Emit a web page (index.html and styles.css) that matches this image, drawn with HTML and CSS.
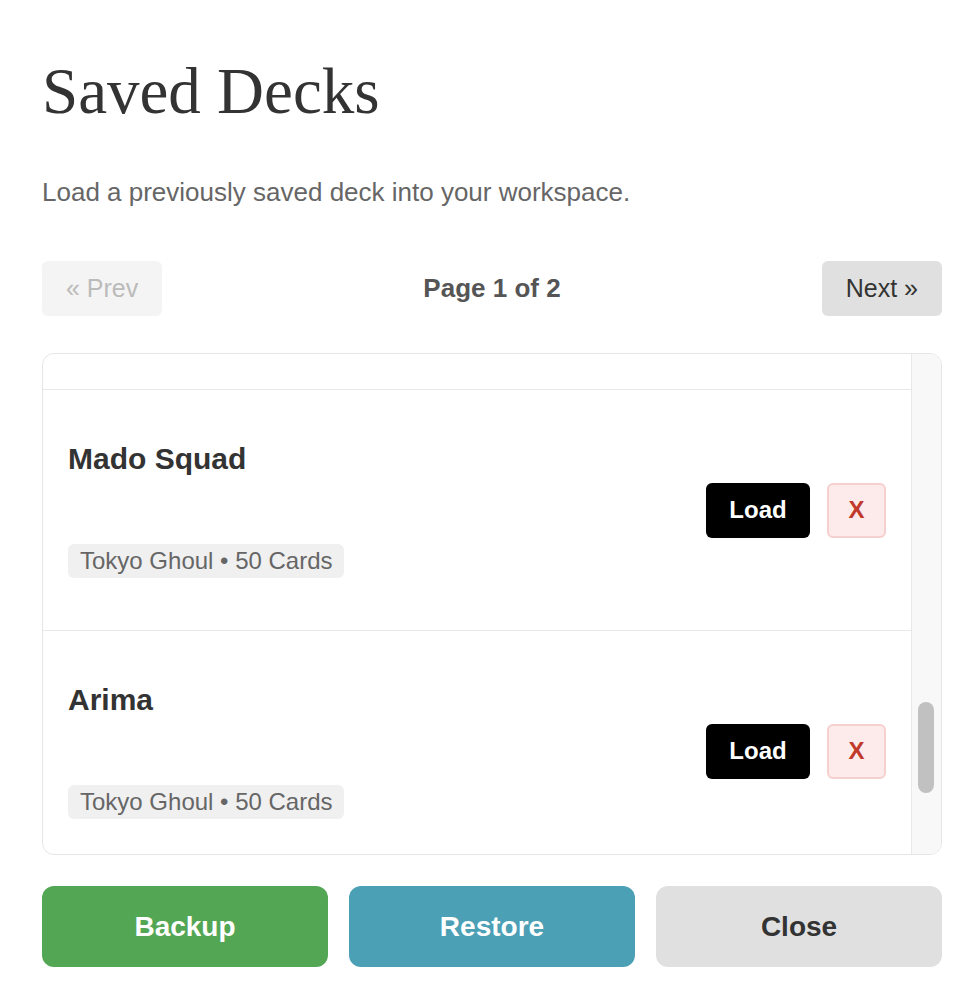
FILE: index.html
```html
<!DOCTYPE html>
<html lang="en">

<head>
    <meta charset="UTF-8">
    <meta name="viewport" content="width=device-width, initial-scale=1.0">
    <title>Saved Decks</title>
    <link rel="stylesheet" href="styles.css">
</head>

<body>
    <div class="modal">
        <h1 class="title">Saved Decks</h1>
        <p class="subtitle">Load a previously saved deck into your workspace.</p>

        <div class="pager">
            <button class="pager-btn" disabled>&laquo; Prev</button>
            <span class="pager-label">Page 1 of 2</span>
            <button class="pager-btn">Next &raquo;</button>
        </div>

        <div class="list-box">
            <div class="deck-list" id="deckList">
                <div class="deck">
                    <div class="deck-info">
                        <div class="deck-name">Kaneki Rush</div>
                        <div><span class="deck-meta">Tokyo Ghoul &bull; 50 Cards</span></div>
                    </div>
                    <div class="deck-actions">
                        <button class="load-btn">Load</button>
                        <button class="delete-btn">X</button>
                    </div>
                </div>
                <div class="deck">
                    <div class="deck-info">
                        <div class="deck-name">Aogiri Tree</div>
                        <div><span class="deck-meta">Tokyo Ghoul &bull; 50 Cards</span></div>
                    </div>
                    <div class="deck-actions">
                        <button class="load-btn">Load</button>
                        <button class="delete-btn">X</button>
                    </div>
                </div>
                <div class="deck">
                    <div class="deck-info">
                        <div class="deck-name">Anteiku</div>
                        <div><span class="deck-meta">Tokyo Ghoul &bull; 50 Cards</span></div>
                    </div>
                    <div class="deck-actions">
                        <button class="load-btn">Load</button>
                        <button class="delete-btn">X</button>
                    </div>
                </div>
                <div class="deck">
                    <div class="deck-info">
                        <div class="deck-name">CCG Elite</div>
                        <div><span class="deck-meta">Tokyo Ghoul &bull; 50 Cards</span></div>
                    </div>
                    <div class="deck-actions">
                        <button class="load-btn">Load</button>
                        <button class="delete-btn">X</button>
                    </div>
                </div>
                <div class="deck">
                    <div class="deck-info">
                        <div class="deck-name">Quinx Squad</div>
                        <div><span class="deck-meta">Tokyo Ghoul &bull; 50 Cards</span></div>
                    </div>
                    <div class="deck-actions">
                        <button class="load-btn">Load</button>
                        <button class="delete-btn">X</button>
                    </div>
                </div>
                <div class="deck">
                    <div class="deck-info">
                        <div class="deck-name">Jason</div>
                        <div><span class="deck-meta">Tokyo Ghoul &bull; 50 Cards</span></div>
                    </div>
                    <div class="deck-actions">
                        <button class="load-btn">Load</button>
                        <button class="delete-btn">X</button>
                    </div>
                </div>
                <div class="deck">
                    <div class="deck-info">
                        <div class="deck-name">Touka Control</div>
                        <div><span class="deck-meta">Tokyo Ghoul &bull; 50 Cards</span></div>
                    </div>
                    <div class="deck-actions">
                        <button class="load-btn">Load</button>
                        <button class="delete-btn">X</button>
                    </div>
                </div>
                <div class="deck">
                    <div class="deck-info">
                        <div class="deck-name">Owl Tempo</div>
                        <div><span class="deck-meta">Tokyo Ghoul &bull; 50 Cards</span></div>
                    </div>
                    <div class="deck-actions">
                        <button class="load-btn">Load</button>
                        <button class="delete-btn">X</button>
                    </div>
                </div>
                <div class="deck">
                    <div class="deck-info">
                        <div class="deck-name">Mado Squad</div>
                        <div><span class="deck-meta">Tokyo Ghoul &bull; 50 Cards</span></div>
                    </div>
                    <div class="deck-actions">
                        <button class="load-btn">Load</button>
                        <button class="delete-btn">X</button>
                    </div>
                </div>
                <div class="deck">
                    <div class="deck-info">
                        <div class="deck-name">Arima</div>
                        <div><span class="deck-meta">Tokyo Ghoul &bull; 50 Cards</span></div>
                    </div>
                    <div class="deck-actions">
                        <button class="load-btn">Load</button>
                        <button class="delete-btn">X</button>
                    </div>
                </div>
                <div class="deck">
                    <div class="deck-info">
                        <div class="deck-name">Suzuya</div>
                        <div><span class="deck-meta">Tokyo Ghoul &bull; 50 Cards</span></div>
                    </div>
                    <div class="deck-actions">
                        <button class="load-btn">Load</button>
                        <button class="delete-btn">X</button>
                    </div>
                </div>
            </div>
            <div class="scroll-track">
                <div class="scroll-thumb"></div>
            </div>
        </div>

        <div class="footer">
            <button class="footer-btn backup">Backup</button>
            <button class="footer-btn restore">Restore</button>
            <button class="footer-btn close">Close</button>
        </div>
    </div>

    <script>
        const deckList = document.getElementById('deckList');
        deckList.scrollTop = 8 * 241 - 36;
    </script>
</body>

</html>
```

FILE: styles.css
```css
body {
    margin: 0;
    background-color: #fff;
    font-family: "Liberation Sans", Arial, sans-serif;
    color: #333;
}
.modal {
    padding: 42px 38px 38px 42px;
}
.title {
    margin: 10px 0 0;
    font-family: "Liberation Serif", "Times New Roman", serif;
    font-weight: normal;
    font-size: 65px;
    line-height: 1.2;
    color: #333;
}
.subtitle {
    margin: 46px 0 0;
    font-size: 26px;
    line-height: 32px;
    color: #666;
}
.pager {
    display: flex;
    justify-content: space-between;
    align-items: center;
    margin-top: 53px;
}
.pager-btn {
    height: 55px;
    padding: 0 24px;
    font-family: inherit;
    font-size: 25px;
    color: #333;
    background: #e0e0e0;
    border: none;
    border-radius: 6px;
}
.pager-btn:disabled {
    color: #bbb;
    background: #f4f4f4;
}
.pager-label {
    font-size: 26px;
    font-weight: bold;
    color: #555;
}
.list-box {
    display: flex;
    margin-top: 37px;
    height: 500px;
    overflow: hidden;
    border: 1px solid #e6e6e6;
    border-radius: 12px;
}
.deck-list {
    flex: 1;
    overflow: hidden;
}
.scroll-track {
    width: 29px;
    background: #f8f8f8;
    border-left: 1px solid #e8e8e8;
}
.scroll-thumb {
    width: 16px;
    height: 91px;
    margin: 348px 0 0 6px;
    background: #c1c1c1;
    border-radius: 8px;
}
.deck {
    display: flex;
    justify-content: space-between;
    align-items: center;
    height: 241px;
    box-sizing: border-box;
    padding: 0 25px;
    border-bottom: 1px solid #e8e8e8;
}
.deck-info {
    display: flex;
    flex-direction: column;
    gap: 68px;
}
.deck-name {
    font-size: 30px;
    font-weight: bold;
    line-height: 34px;
    color: #333;
}
.deck-meta {
    display: inline-block;
    padding: 0 11px 0 12px;
    line-height: 34px;
    font-size: 24px;
    color: #666;
    background: #f0f0f0;
    border-radius: 6px;
}
.deck-actions {
    display: flex;
    gap: 17px;
}
.load-btn {
    width: 104px;
    height: 55px;
    font-family: inherit;
    font-size: 24px;
    font-weight: bold;
    color: #fff;
    background: #000;
    border: none;
    border-radius: 6px;
}
.delete-btn {
    width: 59px;
    height: 55px;
    font-family: inherit;
    font-size: 24px;
    font-weight: bold;
    color: #c0392b;
    background: #fdeaea;
    border: 2px solid #f6cfcf;
    border-radius: 6px;
}
.footer {
    display: flex;
    gap: 21px;
    margin-top: 31px;
}
.footer-btn {
    flex: 1;
    height: 81px;
    font-family: inherit;
    font-size: 28px;
    font-weight: bold;
    border: none;
    border-radius: 12px;
}
.backup {
    color: #fff;
    background: #53a653;
}
.restore {
    color: #fff;
    background: #4ba0b5;
}
.close {
    color: #333;
    background: #e0e0e0;
}
```
